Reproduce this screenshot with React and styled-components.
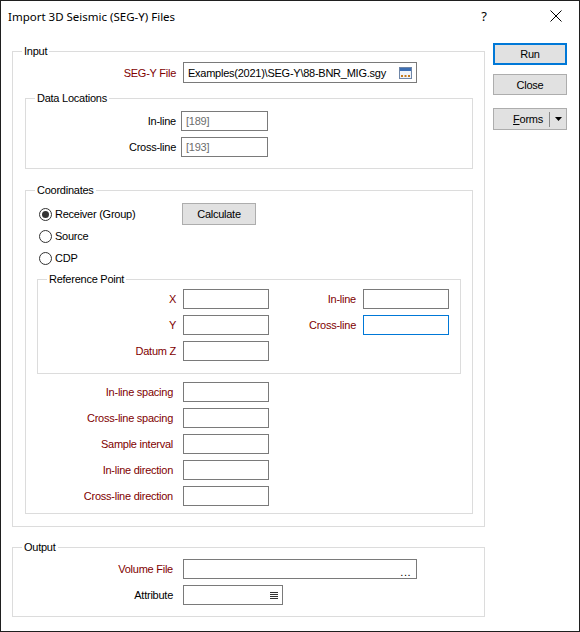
import React from "react";
import styled, { createGlobalStyle } from "styled-components";

const Global = createGlobalStyle`
    body {
        margin: 0;
        background: #ffffff;
    }
`;

const Window = styled.div`
    width: 580px;
    height: 632px;
    box-sizing: border-box;
    border: 1px solid #1f1f1f;
    background: #ffffff;
    font-family: "Liberation Sans", Arial, sans-serif;
    font-size: 11px;
    letter-spacing: -0.25px;
    color: #000000;
    display: flex;
    flex-direction: column;
`;

const TitleBar = styled.div`
    height: 30px;
    display: flex;
    align-items: center;
    padding-left: 7px;
    letter-spacing: 0;
`;

const Title = styled.div`
    font-family: "Noto Sans", "Open Sans", sans-serif;
    font-size: 11.5px;
    color: #000;
    flex: 1;
`;

const TitleButton = styled.div`
    width: 46px;
    height: 30px;
    display: flex;
    align-items: center;
    justify-content: center;
    margin-right: ${(props) => props.$mr || 0}px;
    font-family: "Noto Sans", sans-serif;
    font-size: 13px;
`;

const Body = styled.div`
    display: flex;
    align-items: flex-start;
    padding-left: 11px;
`;

const Main = styled.div`
    width: 473px;
    display: flex;
    flex-direction: column;
`;

const Side = styled.div`
    margin-left: 8px;
    padding-top: 12px;
    display: flex;
    flex-direction: column;
`;

const Group = styled.div`
    position: relative;
    box-sizing: border-box;
    border: 1px solid #dcdcdc;
    width: ${(props) => props.$w}px;
    margin-top: ${(props) => props.$mt}px;
    margin-left: ${(props) => props.$ml || 0}px;
    padding: ${(props) => props.$pad || "0"};
    display: flex;
    flex-direction: column;
`;

const Legend = styled.span`
    position: absolute;
    top: -7px;
    left: 9px;
    line-height: 13px;
    padding: 0 2px;
    background: #ffffff;
    color: #000;
`;

const Row = styled.div`
    display: flex;
    align-items: center;
    margin-top: ${(props) => props.$mt}px;
`;

const Label = styled.div`
    width: ${(props) => props.$w}px;
    margin-right: ${(props) => props.$gap}px;
    flex-shrink: 0;
    text-align: right;
    color: ${(props) => (props.$req ? "#800000" : "#000000")};
    white-space: nowrap;
`;

const Field = styled.div`
    width: ${(props) => props.$w}px;
    height: ${(props) => props.$h || 20}px;
    box-sizing: border-box;
    border: 1px solid ${(props) => (props.$focus ? "#0078d7" : "#7a7a7a")};
    background: #ffffff;
    display: flex;
    align-items: center;
    padding: 0 4px 0 4px;
    flex-shrink: 0;
    color: ${(props) => (props.$dim ? "#6d6d6d" : "#000000")};
    white-space: nowrap;
    overflow: hidden;
`;

const FieldText = styled.span`
    flex: 1;
`;

const Dots = styled.span`
    align-self: flex-end;
    line-height: 12px;
    margin-right: 1px;
    letter-spacing: 0.5px;
`;

const RadioRow = styled.div`
    display: flex;
    align-items: center;
    height: ${(props) => props.$h}px;
    margin-top: ${(props) => props.$mt}px;
    padding-left: 13px;
`;

const RadioItem = styled.label`
    display: flex;
    align-items: center;
    width: ${(props) => props.$w || 143}px;
`;

const RadioCircle = styled.span`
    width: 13px;
    height: 13px;
    box-sizing: border-box;
    border: 1px solid #333333;
    border-radius: 50%;
    display: flex;
    align-items: center;
    justify-content: center;
    margin-right: 3px;
    &::after {
        content: "";
        width: 7px;
        height: 7px;
        border-radius: 50%;
        background: ${(props) => (props.$on ? "#333333" : "transparent")};
    }
`;

const Button = styled.div`
    width: 74px;
    height: ${(props) => props.$h || 22}px;
    margin-top: ${(props) => props.$mt || 0}px;
    box-sizing: border-box;
    background: #e1e1e1;
    border: 1px solid ${(props) => (props.$default ? "#0078d7" : "#adadad")};
    box-shadow: ${(props) => (props.$default ? "inset 0 0 0 1px #0078d7" : "none")};
    display: flex;
    align-items: center;
    justify-content: center;
    color: #000;
`;

const FormsText = styled.span`
    flex: 1;
    text-align: right;
    padding-right: 6px;
    & u {
        text-decoration: underline;
    }
`;

const Separator = styled.span`
    width: 1px;
    height: 15px;
    background: #8a8a8a;
`;

const ArrowBox = styled.span`
    width: 16px;
    display: flex;
    align-items: center;
    justify-content: center;
`;

const BrowseIcon = () => (
    <svg width="13" height="12" viewBox="0 0 13 12">
        <rect x="0.5" y="0.5" width="12" height="11" fill="#eef3fa" stroke="#6f86a8" />
        <rect x="1" y="1" width="11" height="3" fill="#3d6fb3" />
        <rect x="2" y="8" width="2" height="2" fill="#c47a1e" />
        <rect x="5.5" y="8" width="2" height="2" fill="#c47a1e" />
        <rect x="9" y="8" width="2" height="2" fill="#c47a1e" />
    </svg>
);

const ListIcon = () => (
    <svg width="8" height="9" viewBox="0 0 8 9">
        <rect x="0" y="1" width="8" height="1" fill="#333" />
        <rect x="0" y="3" width="8" height="1" fill="#333" />
        <rect x="0" y="5" width="8" height="1" fill="#333" />
        <rect x="0" y="7" width="8" height="1" fill="#333" />
    </svg>
);

const CloseIcon = () => (
    <svg width="12" height="12" viewBox="0 0 12 12">
        <path d="M0.5 0.5 L11.5 11.5 M11.5 0.5 L0.5 11.5" stroke="#000" strokeWidth="1" />
    </svg>
);

const DownArrow = () => (
    <svg width="7" height="4" viewBox="0 0 7 4">
        <path d="M0 0 H7 L3.5 4 Z" fill="#000" />
    </svg>
);

const spacingRows = [
    "In-line spacing",
    "Cross-line spacing",
    "Sample interval",
    "In-line direction",
    "Cross-line direction",
];

const App = () => {
    return (
        <Window>
            <Global />
            <TitleBar>
                <Title>Import 3D Seismic (SEG-Y) Files</Title>
                <TitleButton $mr={26}>?</TitleButton>
                <TitleButton>
                    <CloseIcon />
                </TitleButton>
            </TitleBar>
            <Body>
                <Main>
                    <Group $w={473} $mt={20} $pad="0 11px 12px 12px">
                        <Legend>Input</Legend>
                        <Row $mt={10}>
                            <Label $w={151} $gap={7} $req>
                                SEG-Y File
                            </Label>
                            <Field $w={234} $h={21}>
                                <FieldText>Examples(2021)\SEG-Y\88-BNR_MIG.sgy</FieldText>
                                <BrowseIcon />
                            </Field>
                        </Row>

                        <Group $w={448} $mt={15} $pad="0 0 11px 0">
                            <Legend>Data Locations</Legend>
                            <Row $mt={12}>
                                <Label $w={150} $gap={5}>In-line</Label>
                                <Field $w={87} $dim>[189]</Field>
                            </Row>
                            <Row $mt={6}>
                                <Label $w={150} $gap={5}>Cross-line</Label>
                                <Field $w={87} $dim>[193]</Field>
                            </Row>
                        </Group>

                        <Group $w={448} $mt={21} $pad="0 0 7px 0">
                            <Legend>Coordinates</Legend>
                            <RadioRow $mt={12} $h={22}>
                                <RadioItem>
                                    <RadioCircle $on />
                                    Receiver (Group)
                                </RadioItem>
                                <Button>Calculate</Button>
                            </RadioRow>
                            <RadioRow $mt={3} $h={16}>
                                <RadioItem>
                                    <RadioCircle />
                                    Source
                                </RadioItem>
                            </RadioRow>
                            <RadioRow $mt={6} $h={16}>
                                <RadioItem>
                                    <RadioCircle />
                                    CDP
                                </RadioItem>
                            </RadioRow>

                            <Group $w={424} $mt={13} $ml={11} $pad="0 0 12px 0">
                                <Legend>Reference Point</Legend>
                                <Row $mt={9}>
                                    <Label $w={138} $gap={7} $req>X</Label>
                                    <Field $w={86} />
                                    <Label $w={87} $gap={7} $req>In-line</Label>
                                    <Field $w={86} />
                                </Row>
                                <Row $mt={6}>
                                    <Label $w={138} $gap={7} $req>Y</Label>
                                    <Field $w={86} />
                                    <Label $w={87} $gap={7} $req>Cross-line</Label>
                                    <Field $w={86} $focus />
                                </Row>
                                <Row $mt={6}>
                                    <Label $w={138} $gap={7} $req>Datum Z</Label>
                                    <Field $w={86} />
                                </Row>
                            </Group>

                            {spacingRows.map((name, i) => (
                                <Row key={name} $mt={i === 0 ? 8 : 6}>
                                    <Label $w={147} $gap={10} $req>{name}</Label>
                                    <Field $w={86} />
                                </Row>
                            ))}
                        </Group>
                    </Group>

                    <Group $w={473} $mt={20} $pad="0 11px 11px 12px">
                        <Legend>Output</Legend>
                        <Row $mt={11}>
                            <Label $w={148} $gap={10} $req>Volume File</Label>
                            <Field $w={234}>
                                <FieldText />
                                <Dots>...</Dots>
                            </Field>
                        </Row>
                        <Row $mt={6}>
                            <Label $w={148} $gap={10}>Attribute</Label>
                            <Field $w={100}>
                                <FieldText />
                                <ListIcon />
                            </Field>
                        </Row>
                    </Group>
                </Main>

                <Side>
                    <Button $default>Run</Button>
                    <Button $mt={9} $h={21}>Close</Button>
                    <Button $mt={13}>
                        <FormsText>
                            <u>F</u>orms
                        </FormsText>
                        <Separator />
                        <ArrowBox>
                            <DownArrow />
                        </ArrowBox>
                    </Button>
                </Side>
            </Body>
        </Window>
    );
};

export default App;
